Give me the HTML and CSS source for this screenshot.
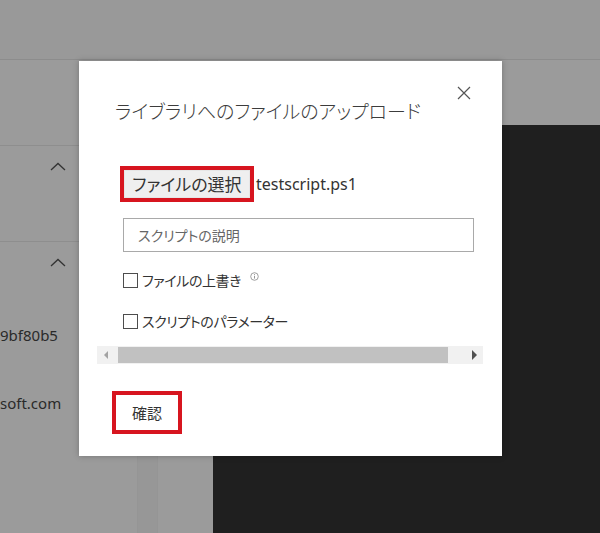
FILE: index.html
```html
<!DOCTYPE html>
<html lang="ja">
<head>
<meta charset="utf-8">
<title>ライブラリへのファイルのアップロード</title>
<link rel="stylesheet" href="styles.css">
</head>
<body>
<div class="page">
  <div class="topbar"></div>
  <div class="main">
    <aside class="sidebar">
      <div class="sec sec-top"></div>
      <div class="sec sec-mid">
        <svg class="chev" width="16" height="9" viewBox="0 0 16 9"><polyline points="1,8 8,1.5 15,8" fill="none" stroke="#333" stroke-width="1.3"/></svg>
      </div>
      <div class="sec-last">
        <svg class="chev" width="16" height="9" viewBox="0 0 16 9"><polyline points="1,8 8,1.5 15,8" fill="none" stroke="#333" stroke-width="1.3"/></svg>
        <div class="side-text side-id">9bf80b5</div>
        <div class="side-text side-mail">soft.com</div>
      </div>
    </aside>
    <div class="gutter"></div>
    <div class="pane"></div>
    <div class="editor"></div>
  </div>

  <div class="dialog" role="dialog">
    <h1 class="dialog-title">ライブラリへのファイルのアップロード</h1>
    <button class="close" aria-label="閉じる">
      <svg width="14" height="14" viewBox="0 0 14 14"><path d="M1 1L13 13M13 1L1 13" stroke="#555" stroke-width="1.2" fill="none"/></svg>
    </button>
    <div class="dialog-body">
      <div class="form">
        <div class="file-row">
          <button class="file-btn">ファイルの選択</button>
          <span class="file-name">testscript.ps1</span>
        </div>
        <input class="desc" type="text" placeholder="スクリプトの説明">
        <label class="check check-1"><input type="checkbox" class="box"><span>ファイルの上書き</span>
          <svg class="info" width="9" height="9" viewBox="0 0 9 9"><circle cx="4.5" cy="4.5" r="3.8" fill="none" stroke="#888" stroke-width="0.8"/><path d="M4.5 3.8V6.6" stroke="#888" stroke-width="0.9"/><circle cx="4.5" cy="2.6" r="0.5" fill="#888"/></svg>
        </label>
        <label class="check check-2"><input type="checkbox" class="box"><span>スクリプトのパラメーター</span></label>
      </div>
      <div class="hscroll">
        <div class="sb-btn"><span class="tri-left"></span></div>
        <div class="sb-track"><div class="sb-thumb"></div></div>
        <div class="sb-btn"><span class="tri-right"></span></div>
      </div>
    </div>
    <div class="dialog-foot">
      <button class="confirm">確認</button>
    </div>
  </div>
</div>
</body>
</html>
```

FILE: styles.css
```css
* { box-sizing: border-box; }
html, body { margin: 0; padding: 0; }
body {
  width: 600px;
  height: 533px;
  overflow: hidden;
  background: #9b9b9b;
  font-family: "Noto Sans", "Noto Sans CJK JP", sans-serif;
  color: #333;
}
.page { position: relative; width: 600px; height: 533px; }

.topbar {
  height: 60px;
  background: #999999;
  border-bottom: 1px solid #8c8c8c;
}
.main { display: flex; height: 473px; }

.sidebar { width: 137px; background: #9b9b9b; }
.sec { border-bottom: 1px solid #8e8e8e; }
.sec-top { height: 86px; }
.sec-mid { height: 96px; padding-top: 16px; }
.sec-last { padding-top: 16px; }
.chev { display: block; margin-left: 50px; }

.side-text {
  white-space: nowrap;
  font-size: 15px;
  line-height: 20px;
  color: #2a2a2a;
}
.side-id { margin-top: 58px; }
.side-mail { margin-top: 48px; }

.gutter { width: 21px; background: #979797; border-left: 1px solid #959595; border-right: 1px solid #959595; }
.pane { width: 55px; background: #9b9b9b; }
.editor { flex: 1; margin-top: 65px; background: #1f1f1f; }

.dialog {
  position: absolute;
  left: 79px;
  top: 61px;
  width: 423px;
  height: 395px;
  background: #ffffff;
  box-shadow: 0 0 6px rgba(0, 0, 0, 0.25);
}
.dialog-title {
  margin: 0;
  padding: 36px 0 0 36px;
  font-family: "Noto Sans CJK JP", sans-serif;
  font-size: 19px;
  line-height: 28px;
  font-weight: 300;
  font-feature-settings: "palt";
  color: #3c3c3c;
}
.close {
  position: absolute;
  right: 31px;
  top: 25px;
  width: 14px;
  height: 14px;
  padding: 0;
  border: 0;
  background: none;
}
.close svg { display: block; }

.dialog-body { padding: 0 19px 0 18px; margin-top: 45px; }
.form { padding-left: 26px; }

.file-row { display: flex; align-items: center; height: 28px; }
.file-btn {
  margin-left: 1px;
  width: 126px;
  height: 28px;
  padding: 0;
  background: #efefef;
  border: 1px solid #e6e6e6;
  outline: 4px solid #d7151f;
  font-family: "Noto Sans CJK JP", sans-serif;
  font-size: 17px;
  line-height: 26px;
  font-weight: 400;
  font-feature-settings: "palt";
  color: #333;
}
.file-name { margin-left: 6px; font-size: 16px; line-height: 20px; color: #333; }

.desc {
  display: block;
  margin-top: 20px;
  width: 351px;
  height: 34px;
  border: 1px solid #a9a9a9;
  padding: 0 0 0 14px;
  font-family: "Noto Sans CJK JP", sans-serif;
  font-size: 14px;
  font-feature-settings: "palt";
  color: #333;
  background: #fff;
}
.desc::placeholder { color: #666; }

.check {
  display: flex;
  align-items: center;
  height: 20px;
  font-family: "Noto Sans CJK JP", sans-serif;
  font-size: 14px;
  line-height: 20px;
  letter-spacing: -0.4px;
  font-feature-settings: "palt";
  color: #333;
}
.check-1 { margin-top: 18px; }
.check-2 { margin-top: 21px; }
.box {
  appearance: none;
  -webkit-appearance: none;
  margin: 0 4px 0 0;
  width: 15px;
  height: 15px;
  border: 1px solid #4d4d4d;
  background: #fff;
  flex: none;
}
.info { margin-left: 9px; margin-top: -8px; }

.hscroll {
  display: flex;
  margin-top: 15px;
  height: 18px;
  background: #f1f1f1;
}
.sb-btn { width: 17px; display: flex; align-items: center; justify-content: center; }
.sb-track { flex: 1; display: flex; align-items: center; }
.sb-thumb { margin-left: 4px; width: 330px; height: 16px; background: #c1c1c1; }
.tri-left {
  width: 0; height: 0;
  border-top: 4px solid transparent;
  border-bottom: 4px solid transparent;
  border-right: 4px solid #a3a3a3;
}
.tri-right {
  width: 0; height: 0;
  border-top: 5px solid transparent;
  border-bottom: 5px solid transparent;
  border-left: 5px solid #505050;
}

.dialog-foot { padding-left: 37px; margin-top: 31px; }
.confirm {
  width: 62px;
  height: 35px;
  padding: 0;
  background: #fff;
  border: 0;
  outline: 4px solid #d7151f;
  font-family: "Noto Sans CJK JP", sans-serif;
  font-size: 15px;
  color: #333;
}
```
